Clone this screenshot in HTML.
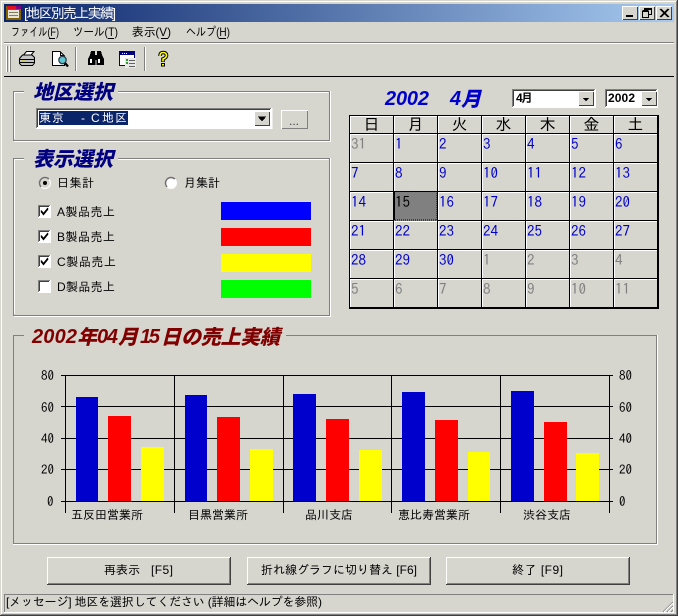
<!DOCTYPE html>
<html><head><meta charset="utf-8"><style>
html,body{margin:0;padding:0;background:#d6d5ce;width:678px;height:616px;overflow:hidden}
svg{display:block;position:absolute;left:0;top:0}
text{font-family:"Liberation Sans","IPAGothic","Noto Sans CJK JP",sans-serif;font-size:12px;fill:#000;white-space:pre}
.t{font-family:"Noto Sans CJK JP","IPAGothic",sans-serif;font-weight:900;font-style:italic;font-size:20px}
.d{font-family:"IPAGothic","Liberation Sans",sans-serif;font-size:15px;fill:#0000cc}
.n{font-family:"IPAGothic","Liberation Sans",sans-serif;font-size:13px}
.h{font-family:"IPAGothic",sans-serif;font-size:16px}
.l{font-family:"Liberation Sans",sans-serif;font-weight:700;font-style:italic;font-size:20px}
.b{font-weight:700;font-size:12px}
</style></head><body>
<svg width="678" height="616" viewBox="0 0 678 616" xmlns="http://www.w3.org/2000/svg" shape-rendering="crispEdges">
<defs><linearGradient id="tb" x1="0" x2="1" y1="0" y2="0"><stop offset="0" stop-color="#0a246a"/><stop offset="1" stop-color="#a6caf0"/></linearGradient></defs>
<rect width="678" height="616" fill="#d6d5ce"/>
<!-- window frame -->
<path d="M1 1.5H677M1.5 1V615" stroke="#fff" fill="none"/>
<path d="M676.5 1V615.5M1 614.5H677" stroke="#808080" fill="none"/>
<path d="M677.5 0V616M0 615.5H678" stroke="#404040" fill="none"/>
<rect x="4" y="4" width="670" height="18" fill="url(#tb)"/>
<!-- title icon -->
<rect x="6" y="6" width="15" height="14" fill="#806000"/>
<rect x="7" y="6" width="14" height="3" fill="#e01020"/>
<rect x="16" y="6" width="5" height="3" fill="#800080"/>
<rect x="8" y="10" width="11" height="8" fill="#e8e4d8"/>
<path d="M9 12.5H18M9 15.5H18" stroke="#808060"/>
<text x="24" y="18" style="fill:#fff;font-size:14px" textLength="92">[地区別売上実績]</text>
<!-- window buttons -->
<g id="wb">
<rect x="622" y="6" width="16" height="14" fill="#d6d5ce"/><path d="M622.5 20V6.5H637.5" stroke="#fff" fill="none"/><path d="M623 19.500H637.500V7" stroke="#404040" fill="none"/>
<rect x="626" y="15" width="7" height="2" fill="#000"/>
<rect x="639" y="6" width="16" height="14" fill="#d6d5ce"/><path d="M639.500 20V6.500H654.500" stroke="#fff" fill="none"/><path d="M640 19.500H654.500V7" stroke="#404040" fill="none"/>
<path d="M644.500 10V8.500H651.500V14.500H649M642.500 11.500H648.500V17.500H642.500Z M644.500 9.500H651.500M642.500 10.500H648.500" stroke="#000" fill="none"/>
<rect x="656" y="6" width="16" height="14" fill="#d6d5ce"/><path d="M656.500 20V6.500H671.500" stroke="#fff" fill="none"/><path d="M657 19.500H671.500V7" stroke="#404040" fill="none"/>
<path d="M660 9L668 17M661 9L669 17M668 9L660 17M669 9L661 17" stroke="#000" fill="none" shape-rendering="auto" stroke-width="1.1"/>
</g>
<!-- menu -->
<text x="11" y="36" textLength="48" lengthAdjust="spacingAndGlyphs">ファイル(F)</text>
<text x="73" y="36" textLength="45" lengthAdjust="spacingAndGlyphs">ツール(T)</text>
<text x="132" y="36" textLength="39" lengthAdjust="spacingAndGlyphs">表示(V)</text>
<text x="186" y="36" textLength="44" lengthAdjust="spacingAndGlyphs">ヘルプ(H)</text>
<path d="M49 38.500H55M108 38.500H114M161 38.500H168M219 38.500H226" stroke="#000" fill="none"/>
<path d="M4 42.500H674" stroke="#808080"/><path d="M4 43.500H674" stroke="#fff"/>
<!-- toolbar -->
<path d="M6.500 46V72M9.500 46V72" stroke="#fff"/><path d="M7.500 46V72M10.500 46V72" stroke="#808080"/>
<path d="M75.500 47V71M144.500 47V71" stroke="#808080"/><path d="M76.500 47V71M145.500 47V71" stroke="#fff"/>
<!-- printer -->
<g shape-rendering="auto">
<path d="M23.500 55L26.500 51.500H34L31 55Z" fill="#fff" stroke="#000"/>
<path d="M19.500 58.500L22.500 55H32L34.500 57.500V63L32.500 65.500H21.500L19.500 63.500Z" fill="#c4c4c4" stroke="#000"/>
<path d="M20 59.500H34M20 62.500H34" stroke="#000" stroke-width="1"/>
<rect x="22" y="60.500" width="4" height="1.300" fill="#e0d000"/>
</g>
<!-- preview -->
<path d="M52.500 51.500H60L64.500 56V65.500H52.500Z" fill="#fff" stroke="#000"/>
<path d="M60.500 52V55.500H64" stroke="#000" fill="none"/>
<g shape-rendering="auto">
<circle cx="62.500" cy="60" r="3.700" fill="#60c8d0" stroke="#304050" stroke-width="1.300"/>
<path d="M65 63L68 66.500" stroke="#000" stroke-width="2.200"/>
</g>
<!-- binoculars -->
<path d="M91 51H95V55H97V51H101L102 55L104 59V65H96.500V60H95.500V65H88V59L90 55Z" fill="#000"/>
<rect x="90" y="59" width="2" height="4" fill="#fff"/><rect x="98" y="59" width="2" height="4" fill="#fff"/>
<!-- window icon -->
<rect x="119.500" y="51.500" width="15" height="14" fill="#fff" stroke="#000080"/>
<rect x="120" y="52" width="14" height="3" fill="#000080"/>
<path d="M122 53.500H127" stroke="#fff" stroke-dasharray="1 1"/>
<rect x="125" y="58" width="11" height="10" fill="#e8e8e8"/>
<path d="M129 60.500H135M129 63.500H135M129 66.500H135" stroke="#606060"/>
<path d="M126 60H128M127 59V61M126 63H128M127 62V64" stroke="#008000"/>
<!-- help -->
<g shape-rendering="auto" fill="none" stroke-linecap="butt">
<path d="M160 56Q160 52.500 163 52.500Q166.500 52.500 166.500 55.500Q166.500 57.500 163 59V62" stroke="#000" stroke-width="3.600"/>
<path d="M160 56Q160 52.500 163 52.500Q166.500 52.500 166.500 55.500Q166.500 57.500 163 59V61.500" stroke="#ffff00" stroke-width="1.600"/>
</g>
<rect x="161.500" y="63.500" width="3" height="2.500" fill="#ffff00" stroke="#000"/>
<path d="M4 76.500H674" stroke="#000"/>

<!-- group 1 -->
<path d="M24 91.500H13.500V140.500H329.500V91.500H118" fill="none" stroke="#808080"/>
<path d="M24 92.500H14.500V139M14 141.500H330.500V91M118 92.500H328.500" fill="none" stroke="#fff"/>
<text class="t" x="33" y="99" style="fill:#000080" textLength="80">地区選択</text>
<rect x="36" y="108" width="236" height="20" fill="#fff"/>
<path d="M36.500 128V108.500H271" stroke="#808080" fill="none"/><path d="M37.500 127V109.500H270" stroke="#404040" fill="none"/><path d="M36 128.500H272V108" stroke="#fff" fill="none"/>
<rect x="39" y="111" width="89" height="14" fill="#0a246a"/>
<text x="39" y="122" style="fill:#fff" textLength="25">東京</text>
<text x="81" y="122" style="fill:#fff">-</text><text x="91" y="122" style="fill:#fff">C</text>
<text x="102" y="122" style="fill:#fff" textLength="25">地区</text>
<rect x="254" y="111" width="16" height="15" fill="#d6d5ce"/>
<path d="M254.500 126V111.500H270" stroke="#fff" fill="none"/><path d="M255 125.500H269.500V112" stroke="#404040" fill="none"/>
<path d="M258 116.500H266L262 121Z" fill="#000" stroke="#000" stroke-width=".5"/>
<path d="M281.500 129V110.500H308" stroke="#fff" fill="none"/><path d="M282 128.500H307.500V111" stroke="#808080" fill="none"/>
<text x="289" y="125" style="fill:#404040">...</text>

<!-- group 2 -->
<path d="M24 158.500H13.500V315.500H329.500V158.500H118" fill="none" stroke="#808080"/>
<path d="M24 159.500H14.500V314M14 316.500H330.500V158M118 159.500H328.500" fill="none" stroke="#fff"/>
<text class="t" x="33" y="166" style="fill:#000080" textLength="80">表示選択</text>
<g shape-rendering="auto" fill="none">
<circle cx="45" cy="183" r="5.500" fill="#d6d5ce" stroke="#fff"/>
<path d="M41.100 186.900A5.500 5.500 0 0 1 48.900 179.100" stroke="#707070" stroke-width="1.400"/>
<circle cx="45" cy="183" r="2" fill="#000"/>
<circle cx="171" cy="183" r="5.500" fill="#fff" stroke="#fff"/>
<path d="M167.100 186.900A5.500 5.500 0 0 1 174.900 179.100" stroke="#707070" stroke-width="1.400"/>
</g>
<text x="57" y="187" textLength="37">日集計</text>
<text x="184" y="187" textLength="36">月集計</text>
<g id="cbs">
<rect x="38" y="205" width="13" height="13" fill="#fff"/><path d="M38.500 217V205.500H50" stroke="#808080" fill="none"/><path d="M39.500 216V206.500H49" stroke="#404040" fill="none"/>
<path d="M41 210.500L43.500 213.500L48 208M41 211.500L43.500 214.500L48 209" stroke="#000" fill="none" shape-rendering="auto" stroke-width="1.200"/>
<rect x="38" y="230" width="13" height="13" fill="#fff"/><path d="M38.500 242V230.500H50" stroke="#808080" fill="none"/><path d="M39.500 241V231.500H49" stroke="#404040" fill="none"/>
<path d="M41 235.500L43.500 238.500L48 233M41 236.500L43.500 239.500L48 234" stroke="#000" fill="none" shape-rendering="auto" stroke-width="1.200"/>
<rect x="38" y="255" width="13" height="13" fill="#fff"/><path d="M38.500 267V255.500H50" stroke="#808080" fill="none"/><path d="M39.500 266V256.500H49" stroke="#404040" fill="none"/>
<path d="M41 260.500L43.500 263.500L48 258M41 261.500L43.500 264.500L48 259" stroke="#000" fill="none" shape-rendering="auto" stroke-width="1.200"/>
<rect x="38" y="280" width="13" height="13" fill="#fff"/><path d="M38.500 292V280.500H50" stroke="#808080" fill="none"/><path d="M39.500 291V281.500H49" stroke="#404040" fill="none"/>
</g>
<text x="57" y="216" textLength="58">A製品売上</text>
<text x="57" y="241" textLength="58">B製品売上</text>
<text x="57" y="266" textLength="59">C製品売上</text>
<text x="57" y="291" textLength="58">D製品売上</text>
<rect x="221" y="202" width="90" height="18" fill="#0000ff"/>
<rect x="221" y="228" width="90" height="18" fill="#ff0000"/>
<rect x="221" y="254" width="90" height="18" fill="#ffff00"/>
<rect x="221" y="280" width="90" height="18" fill="#00ff00"/>

<!-- calendar heading -->
<text class="l" x="385" y="105" style="fill:#0000cc" textLength="44">2002</text>
<text class="l" x="450" y="105" style="fill:#0000cc">4</text>
<text class="t" x="461" y="106" style="fill:#0000cc">月</text>
<rect x="512" y="89" width="84" height="19" fill="#fff"/>
<path d="M512.500 107V89.500H595" stroke="#808080" fill="none"/><path d="M513.500 106V90.500H594" stroke="#404040" fill="none"/>
<text class="b" x="516" y="102" textLength="17">4月</text>
<rect x="578" y="91" width="16" height="15" fill="#d6d5ce"/><path d="M578.500 106V91.500H594" stroke="#fff" fill="none"/><path d="M579 105.500H593.500V92" stroke="#404040" fill="none"/>
<path d="M583 98H589L586 101Z" fill="#000" stroke="#000" stroke-width=".5"/>
<rect x="605" y="89" width="53" height="19" fill="#fff"/>
<path d="M605.500 107V89.500H657" stroke="#808080" fill="none"/><path d="M606.500 106V90.500H656" stroke="#404040" fill="none"/>
<text class="b" x="608" y="102" textLength="27">2002</text>
<rect x="641" y="91" width="16" height="15" fill="#d6d5ce"/><path d="M641.500 106V91.500H657" stroke="#fff" fill="none"/><path d="M642 105.500H656.500V92" stroke="#404040" fill="none"/>
<path d="M646 98H652L649 101Z" fill="#000" stroke="#000" stroke-width=".5"/>

<!-- calendar grid -->
<path d="M350 116.500H657M350 134.500H657M350 163.500H657M350 192.500H657M350 221.500H657M350 250.500H657M350 279.500H657" stroke="#fff"/>
<path d="M350.500 116V307M394.500 116V307M438.500 116V307M482.500 116V307M526.500 116V307M570.500 116V307M614.500 116V307" stroke="#fff"/>
<path d="M349 115.500H658M349 133.500H658M349 162.500H658M349 191.500H658M349 220.500H658M349 249.500H658M349 278.500H658" stroke="#000"/>
<path d="M349.500 115V308M393.500 115V308M437.500 115V308M481.500 115V308M525.500 115V308M569.500 115V308M613.500 115V308" stroke="#000"/>
<rect x="657" y="115" width="2" height="193" fill="#000"/>
<rect x="349" y="307" width="310" height="2" fill="#000"/>
<rect x="394" y="192" width="43" height="29" fill="#808080"/>
<rect x="394.500" y="191.500" width="42.500" height="28.500" fill="none" stroke="#000" stroke-dasharray="1 1"/>
<rect x="393" y="191" width="2" height="29" fill="#000"/>
<rect x="393" y="191" width="44" height="1" fill="#000"/>
<g text-anchor="middle">
<text class="h" x="371.500" y="130">日</text><text class="h" x="415.500" y="130">月</text><text class="h" x="459.500" y="130">火</text><text class="h" x="503.500" y="130">水</text><text class="h" x="547.500" y="130">木</text><text class="h" x="591.500" y="130">金</text><text class="h" x="635.500" y="130">土</text>
</g>
<g>
<text class="d" style="fill:#808080" x="351" y="149">31</text><text class="d" x="395" y="149">1</text><text class="d" x="439" y="149">2</text><text class="d" x="483" y="149">3</text><text class="d" x="527" y="149">4</text><text class="d" x="571" y="149">5</text><text class="d" x="615" y="149">6</text>
<text class="d" x="351" y="178">7</text><text class="d" x="395" y="178">8</text><text class="d" x="439" y="178">9</text><text class="d" x="483" y="178">10</text><text class="d" x="527" y="178">11</text><text class="d" x="571" y="178">12</text><text class="d" x="615" y="178">13</text>
<text class="d" x="351" y="207">14</text><text class="d" style="fill:#000" x="395" y="207">15</text><text class="d" x="439" y="207">16</text><text class="d" x="483" y="207">17</text><text class="d" x="527" y="207">18</text><text class="d" x="571" y="207">19</text><text class="d" x="615" y="207">20</text>
<text class="d" x="351" y="236">21</text><text class="d" x="395" y="236">22</text><text class="d" x="439" y="236">23</text><text class="d" x="483" y="236">24</text><text class="d" x="527" y="236">25</text><text class="d" x="571" y="236">26</text><text class="d" x="615" y="236">27</text>
<text class="d" x="351" y="265">28</text><text class="d" x="395" y="265">29</text><text class="d" x="439" y="265">30</text><text class="d" style="fill:#808080" x="483" y="265">1</text><text class="d" style="fill:#808080" x="527" y="265">2</text><text class="d" style="fill:#808080" x="571" y="265">3</text><text class="d" style="fill:#808080" x="615" y="265">4</text>
<text class="d" style="fill:#808080" x="351" y="294">5</text><text class="d" style="fill:#808080" x="395" y="294">6</text><text class="d" style="fill:#808080" x="439" y="294">7</text><text class="d" style="fill:#808080" x="483" y="294">8</text><text class="d" style="fill:#808080" x="527" y="294">9</text><text class="d" style="fill:#808080" x="571" y="294">10</text><text class="d" style="fill:#808080" x="615" y="294">11</text>
</g>

<!-- chart group -->
<path d="M24 335.500H13.500V543.500H656.500V335.500H286" fill="none" stroke="#808080"/>
<path d="M13 544.500H657.500V335" fill="none" stroke="#fff"/>
<text class="l" x="32" y="343" style="fill:#800000" textLength="45">2002</text>
<text class="t" x="77" y="344" style="fill:#800000">年</text>
<text class="l" x="97" y="343" style="fill:#800000" textLength="21">04</text>
<text class="t" x="118" y="344" style="fill:#800000">月</text>
<text class="l" x="140" y="343" style="fill:#800000" textLength="20">15</text>
<text class="t" x="161" y="344" style="fill:#800000">日</text>
<text class="t" x="181" y="344" style="fill:#800000" textLength="99">の売上実績</text>

<!-- chart -->
<path d="M61 375.500H613M61 406.500H613M61 438.500H613M61 469.500H613M61 501.500H613" stroke="#000"/>
<path d="M65.500 375V513M174.500 375V513M283.500 375V513M391.500 375V513M500.500 375V513M609.500 375V513" stroke="#000"/>
<g fill="#0000cc">
<rect x="76" y="397" width="22" height="104"/><rect x="185" y="395" width="22" height="106"/><rect x="293" y="394" width="23" height="107"/><rect x="402" y="392" width="23" height="109"/><rect x="511" y="391" width="23" height="110"/>
</g>
<g fill="#ff0000">
<rect x="108" y="416" width="23" height="85"/><rect x="217" y="417" width="23" height="84"/><rect x="326" y="419" width="23" height="82"/><rect x="435" y="420" width="23" height="81"/><rect x="544" y="422" width="23" height="79"/>
</g>
<g fill="#ffff00">
<rect x="141" y="447" width="23" height="54"/><rect x="250" y="449" width="23" height="52"/><rect x="359" y="450" width="23" height="51"/><rect x="468" y="452" width="22" height="49"/><rect x="576" y="453" width="23" height="48"/>
</g>
<text class="n" x="41" y="380">80</text><text class="n" x="41" y="412">60</text><text class="n" x="41" y="443">40</text><text class="n" x="41" y="474">20</text><text class="n" x="47" y="506">0</text>
<text class="n" x="619" y="380">80</text><text class="n" x="619" y="412">60</text><text class="n" x="619" y="443">40</text><text class="n" x="619" y="474">20</text><text class="n" x="619" y="506">0</text>
<text x="71" y="519">五反田営業所</text><text x="188" y="519">目黒営業所</text><text x="305" y="519">品川支店</text><text x="398" y="519">恵比寿営業所</text><text x="523" y="519">渋谷支店</text>

<!-- buttons -->
<path d="M47.500 584V557.500H230" stroke="#fff" fill="none"/><path d="M48 583.500H229.500V558" stroke="#808080" fill="none"/><path d="M47 584.500H230.500V557" stroke="#404040" fill="none"/>
<path d="M247.500 584V557.500H430" stroke="#fff" fill="none"/><path d="M248 583.500H429.500V558" stroke="#808080" fill="none"/><path d="M247 584.500H430.500V557" stroke="#404040" fill="none"/>
<path d="M446.500 584V557.500H629" stroke="#fff" fill="none"/><path d="M447 583.500H628.500V558" stroke="#808080" fill="none"/><path d="M446 584.500H629.500V557" stroke="#404040" fill="none"/>
<text x="104" y="574">再表示</text><text x="151" y="574" textLength="22">[F5]</text>
<text x="261" y="574" textLength="156">折れ線グラフに切り替え [F6]</text>
<text x="512" y="574" textLength="51">終了 [F9]</text>

<!-- status bar -->
<path d="M4.500 612V594.500H673" stroke="#808080" fill="none"/><path d="M4 612.500H673.500V594" stroke="#fff" fill="none"/>
<text x="6" y="606" textLength="316">[メッセージ] 地区を選択してください (詳細はヘルプを参照)</text>
<path d="M663 612L673 602M667 612L673 606M671 612L673 610" stroke="#808080" fill="none" shape-rendering="auto"/>
<path d="M664 612L673 603M668 612L673 607" stroke="#fff" fill="none" shape-rendering="auto"/>
</svg>
</body></html>
